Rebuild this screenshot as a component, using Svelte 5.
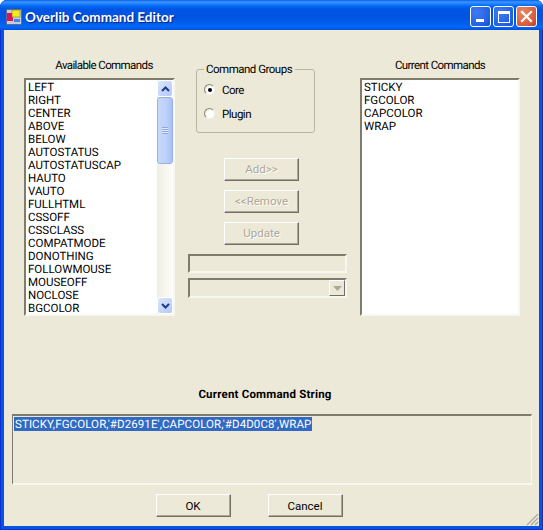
<script>
  const available = ['LEFT', 'RIGHT', 'CENTER', 'ABOVE', 'BELOW', 'AUTOSTATUS', 'AUTOSTATUSCAP', 'HAUTO', 'VAUTO', 'FULLHTML', 'CSSOFF', 'CSSCLASS', 'COMPATMODE', 'DONOTHING', 'FOLLOWMOUSE', 'MOUSEOFF', 'NOCLOSE', 'BGCOLOR'];
  const current = ['STICKY', 'FGCOLOR', 'CAPCOLOR', 'WRAP'];
  const commandString = "STICKY,FGCOLOR,'#D2691E',CAPCOLOR,'#D4D0C8',WRAP";
</script>

<div class="window">
  <header class="titlebar">
    <svg class="app-icon" width="16" height="16" viewBox="0 0 16 16">
      <rect x="0.5" y="0.5" width="15" height="15" fill="#c8ccd8" stroke="#5a6a90"/>
      <rect x="1" y="4" width="6" height="8" fill="#e0105a"/>
      <rect x="6" y="1" width="8" height="7" fill="#f8e820" stroke="#80801c" stroke-width="0.6"/>
      <rect x="8" y="10" width="6" height="3" fill="#3a8ae0"/>
    </svg>
    <span class="title">Overlib Command Editor</span>
    <div class="controls">
      <button class="ctl" aria-label="Minimize"><span class="min-glyph"></span></button>
      <button class="ctl" aria-label="Maximize"><span class="max-glyph"></span></button>
      <button class="ctl close" aria-label="Close">
        <svg width="13" height="13" viewBox="0 0 13 13"><path d="M2 2l9 9M11 2l-9 9" stroke="#fff" stroke-width="2.2" stroke-linecap="square"/></svg>
      </button>
    </div>
  </header>

  <main class="client">
    <section class="top">
      <div class="col left">
        <div class="caption shifted">Available Commands</div>
        <div class="list">
          <ul>
            {#each available as item}<li>{item}</li>{/each}
          </ul>
          <div class="scrollbar">
            <div class="sb-btn">
              <svg width="9" height="6" viewBox="0 0 9 6"><path d="M1 5l3.5-3.5L8 5" fill="none" stroke="#1d3c8c" stroke-width="2"/></svg>
            </div>
            <div class="sb-thumb"><span class="grip"></span></div>
            <div class="sb-track"></div>
            <div class="sb-btn">
              <svg width="9" height="6" viewBox="0 0 9 6"><path d="M1 1l3.5 3.5L8 1" fill="none" stroke="#1d3c8c" stroke-width="2"/></svg>
            </div>
          </div>
        </div>
      </div>

      <div class="col middle">
        <fieldset class="groups">
          <legend>Command Groups</legend>
          <label class="radio"><span class="dot checked"></span>Core</label>
          <label class="radio"><span class="dot"></span>Plugin</label>
        </fieldset>
        <div class="actions">
          <button class="btn" disabled>Add&gt;&gt;</button>
          <button class="btn" disabled>&lt;&lt;Remove</button>
          <button class="btn" disabled>Update</button>
        </div>
        <div class="field"></div>
        <div class="field combo">
          <span class="combo-btn">
            <svg width="9" height="5" viewBox="0 0 9 5"><path d="M0 0h9L4.5 5z" fill="#aca899"/></svg>
          </span>
        </div>
      </div>

      <div class="col right">
        <div class="caption">Current Commands</div>
        <div class="list">
          <ul>
            {#each current as item}<li>{item}</li>{/each}
          </ul>
        </div>
      </div>
    </section>

    <h2 class="string-label">Current Command String</h2>
    <div class="string-box"><span class="selected">{commandString}</span></div>

    <footer class="footer">
      <button class="btn">OK</button>
      <button class="btn">Cancel</button>
    </footer>

    <svg class="grip-corner" width="13" height="13" viewBox="0 0 13 13">
      <path d="M12 1L1 12M12 5L5 12M12 9L9 12" stroke="#aca899" stroke-width="1.2"/>
    </svg>
  </main>
</div>

<style>
  :global(body) {
    margin: 0;
    background: #fff;
  }

  .window {
    width: 543px;
    height: 530px;
    box-sizing: border-box;
    display: flex;
    flex-direction: column;
    border-radius: 7px 7px 0 0;
    background: #0855dd;
    box-shadow: inset 0 0 0 1px #0831d9;
    font-family: Roboto, "Liberation Sans", sans-serif;
    font-size: 11.5px;
    text-rendering: geometricPrecision;
    color: #000;
    overflow: hidden;
  }

  .titlebar {
    height: 30px;
    flex: none;
    display: flex;
    align-items: center;
    padding: 3px 6px 0;
    box-sizing: border-box;
    background: linear-gradient(180deg, #0a5fe8 0, #3d95ff 2px, #1a80ff 4px, #0468f5 6px, #0055e3 9px, #0054e3 18px, #0060f0 24px, #0068f8 27px, #0050d8 30px);
  }

  .app-icon {
    flex: none;
    margin-right: 3px;
  }

  .title {
    flex: 1;
    color: #fff;
    font-family: Lato, sans-serif;
    font-weight: 700;
    font-size: 13.5px;
    text-shadow: 1px 1px 1px #0f1f7a;
  }

  .controls {
    display: flex;
    gap: 2px;
  }

  .ctl {
    width: 21px;
    height: 21px;
    padding: 0;
    position: relative;
    display: flex;
    align-items: center;
    justify-content: center;
    border: 1px solid #fff;
    border-radius: 3px;
    background: radial-gradient(circle at 30% 30%, #3f7cf0, #2360e4 70%, #1b4cc8);
  }

  .close {
    background: radial-gradient(circle at 30% 30%, #ea8a68, #d8583a 70%, #bc3c1c);
  }

  .min-glyph {
    position: absolute;
    left: 5px;
    bottom: 4px;
    width: 8px;
    height: 3px;
    background: #fff;
  }

  .max-glyph {
    width: 12px;
    height: 12px;
    box-sizing: border-box;
    border: 1px solid #fff;
    border-top-width: 3px;
  }

  .client {
    position: relative;
    flex: 1;
    margin: 0 4px 4px;
    padding: 29px 7px 0 8px;
    background: #ece9d8;
    display: flex;
    flex-direction: column;
  }

  .top {
    display: flex;
    gap: 13px;
    padding: 0 12px;
    height: 257px;
  }

  .col {
    display: flex;
    flex-direction: column;
  }

  .left {
    width: 151px;
  }

  .right {
    width: 160px;
  }

  .middle {
    width: 159px;
  }

  .caption {
    height: 13px;
    line-height: 13px;
    margin-bottom: 6px;
    text-align: center;
    letter-spacing: -0.6px;
  }

  .shifted {
    padding-left: 9px;
  }

  .list {
    flex: 1;
    display: flex;
    box-sizing: border-box;
    background: #fff;
    border: 2px solid;
    border-color: #7f7c6e #f7f6ef #f7f6ef #7f7c6e;
    min-height: 0;
    overflow: hidden;
  }

  ul {
    flex: 1;
    list-style: none;
    margin: 0;
    padding: 1px 0 0 2px;
    overflow: hidden;
  }

  li {
    height: 13px;
    line-height: 13px;
    white-space: nowrap;
  }

  .scrollbar {
    width: 16px;
    flex: none;
    display: flex;
    flex-direction: column;
    background: linear-gradient(90deg, #f0eee4, #fdfdfa);
  }

  .sb-btn {
    height: 17px;
    flex: none;
    box-sizing: border-box;
    display: flex;
    align-items: center;
    justify-content: center;
    border: 1px solid #fff;
    border-radius: 3px;
    background: linear-gradient(135deg, #dbe6fc, #b4c9f7);
  }

  .sb-thumb {
    height: 67px;
    flex: none;
    box-sizing: border-box;
    display: flex;
    align-items: center;
    justify-content: center;
    border: 1px solid #98b1e4;
    border-radius: 3px;
    background: linear-gradient(90deg, #c9d8fb, #bcd0fa 60%, #a9c1f5);
  }

  .grip {
    width: 6px;
    height: 7px;
    background: repeating-linear-gradient(180deg, #8ea8e0 0 1px, #e2ebfd 1px 2px);
  }

  .sb-track {
    flex: 1;
  }

  .groups {
    margin: 4px 0 0 8px;
    padding: 0 0 0 7px;
    width: 119px;
    height: 70px;
    box-sizing: border-box;
    border: 1px solid #b8b5a4;
    border-radius: 3px;
    flex: none;
  }

  legend {
    padding: 0 3px 0 2px;
    margin-left: 0;
    line-height: 13px;
    letter-spacing: -0.5px;
  }

  .radio {
    display: flex;
    align-items: center;
    gap: 7px;
    height: 13px;
    margin: 7px 0 11px;
    letter-spacing: -0.5px;
  }

  .dot {
    width: 11px;
    height: 11px;
    box-sizing: border-box;
    border-radius: 50%;
    border: 1px solid #8b8878;
    border-bottom-color: #f4f3ea;
    border-right-color: #f4f3ea;
    background: radial-gradient(circle at 65% 65%, #fff 40%, #dedcc9);
    position: relative;
  }

  .checked::after {
    content: "";
    position: absolute;
    left: 2.5px;
    top: 2.5px;
    width: 4px;
    height: 4px;
    border-radius: 50%;
    background: #000;
  }

  .actions {
    display: flex;
    flex-direction: column;
    align-items: flex-start;
    gap: 9px;
    margin: 25px 0 0 36px;
  }

  .btn {
    width: 75px;
    height: 23px;
    padding: 0;
    box-sizing: border-box;
    background: #ece9d8;
    border: 1px solid;
    border-color: #fff #716f64 #716f64 #fff;
    box-shadow: inset -1px -1px 0 #aca899;
    font: inherit;
    color: #000;
  }

  .btn:disabled {
    color: #aca899;
    text-shadow: 1px 1px 0 #fff;
    padding-bottom: 2px;
  }

  .field {
    height: 19px;
    margin-top: 9px;
    box-sizing: border-box;
    border: 2px solid;
    border-color: #7f7c6e #f7f6ef #f7f6ef #7f7c6e;
  }

  .combo {
    height: 20px;
    margin-top: 5px;
    display: flex;
    justify-content: flex-end;
  }

  .combo-btn {
    width: 16px;
    display: flex;
    align-items: center;
    justify-content: center;
    box-sizing: border-box;
    background: #ece9d8;
    border: 1px solid;
    border-color: #fff #716f64 #716f64 #fff;
  }

  .string-label {
    margin: 71px 0 0;
    font-size: 11.5px;
    line-height: 14px;
    font-weight: 700;
    text-align: center;
    padding-right: 14px;
    letter-spacing: 0.2px;
  }

  .string-box {
    height: 71px;
    margin-top: 13px;
    box-sizing: border-box;
    padding: 1px 0 0 1px;
    line-height: 14px;
    border: 2px solid;
    border-color: #7f7c6e #f7f6ef #f7f6ef #7f7c6e;
    border-left-width: 1px;
    border-right-width: 1px;
  }

  .selected {
    display: inline-block;
    background: #316ac5;
    color: #fff;
    padding: 0 1px;
    letter-spacing: 0.1px;
  }

  .footer {
    display: flex;
    justify-content: center;
    gap: 37px;
    margin-top: 9px;
    padding-right: 46px;
  }

  .grip-corner {
    position: absolute;
    right: 0;
    bottom: 0;
  }
</style>
